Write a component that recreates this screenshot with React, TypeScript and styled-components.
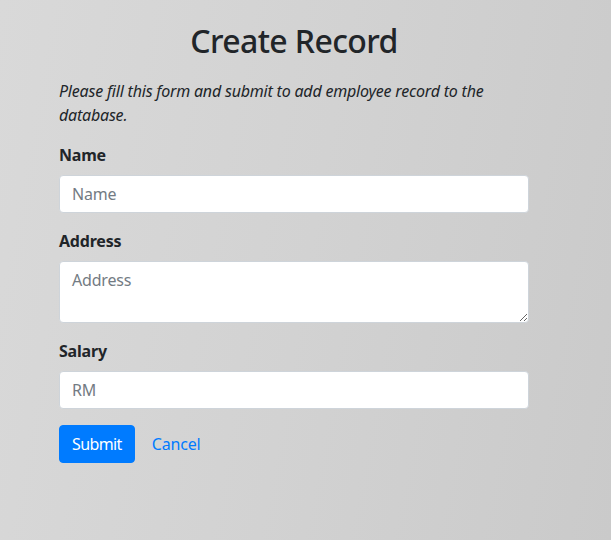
import React from "react";
import styled, { createGlobalStyle } from "styled-components";

const Global = createGlobalStyle`
  html, body { margin: 0; padding: 0; height: 100%; }
  body {
    background: linear-gradient(100deg, #d9d9d9 0%, #d2d2d2 50%, #cacaca 100%);
    font-family: "Noto Sans", "Open Sans", sans-serif;
    color: #212529;
    font-size: 16px;
    line-height: 1.5;
    letter-spacing: -0.2px;
  }
  #root { min-height: 100%; }
  * { box-sizing: border-box; }
`;

const Wrapper = styled.div`
  width: 470px;
  margin-left: 59px;
  padding-top: 22px;
`;

const Title = styled.h2`
  margin: 0 0 19px;
  font-size: 32px;
  font-weight: 500;
  line-height: 1.2;
  letter-spacing: -0.6px;
  text-align: center;
`;

const Intro = styled.p`
  margin: 0 0 16px;
  font-style: italic;
`;

const Form = styled.form`
  display: flex;
  flex-direction: column;
`;

const Group = styled.div`
  display: flex;
  flex-direction: column;
  margin-bottom: 16px;
`;

const Label = styled.label`
  font-weight: 700;
  margin-bottom: 8px;
`;

const fieldCss = `
  display: block;
  width: 100%;
  padding: 6px 12px;
  font-family: inherit;
  font-size: 16px;
  line-height: 24px;
  letter-spacing: -0.2px;
  color: #495057;
  background: #fff;
  border: 1px solid #ced4da;
  border-radius: 4px;
  outline: none;
  &::placeholder { color: #737b83; opacity: 1; }
`;

const Input = styled.input`
  ${fieldCss}
  height: 38px;
`;

const TextArea = styled.textarea`
  ${fieldCss}
  height: 62px;
`;

const Actions = styled.div`
  display: flex;
  align-items: center;
  gap: 4px;
`;

const SubmitButton = styled.button`
  font-family: inherit;
  font-size: 16px;
  line-height: 24px;
  letter-spacing: -0.6px;
  padding: 6px 12px;
  color: #fff;
  background: #007bff;
  border: 1px solid #007bff;
  border-radius: 4px;
  cursor: pointer;
`;

const CancelLink = styled.a`
  display: inline-block;
  padding: 6px 12px;
  font-size: 16px;
  line-height: 24px;
  border: 1px solid transparent;
  color: #007bff;
  text-decoration: none;
`;

export default function App() {
  return (
    <>
      <Global />
      <Wrapper>
        <Title>Create Record</Title>
        <Intro>Please fill this form and submit to add employee record to the database.</Intro>
        <Form onSubmit={(e) => e.preventDefault()}>
          <Group>
            <Label>Name</Label>
            <Input type="text" placeholder="Name" />
          </Group>
          <Group>
            <Label>Address</Label>
            <TextArea placeholder="Address" />
          </Group>
          <Group>
            <Label>Salary</Label>
            <Input type="text" placeholder="RM" />
          </Group>
          <Actions>
            <SubmitButton type="submit">Submit</SubmitButton>
            <CancelLink href="#">Cancel</CancelLink>
          </Actions>
        </Form>
      </Wrapper>
    </>
  );
}
